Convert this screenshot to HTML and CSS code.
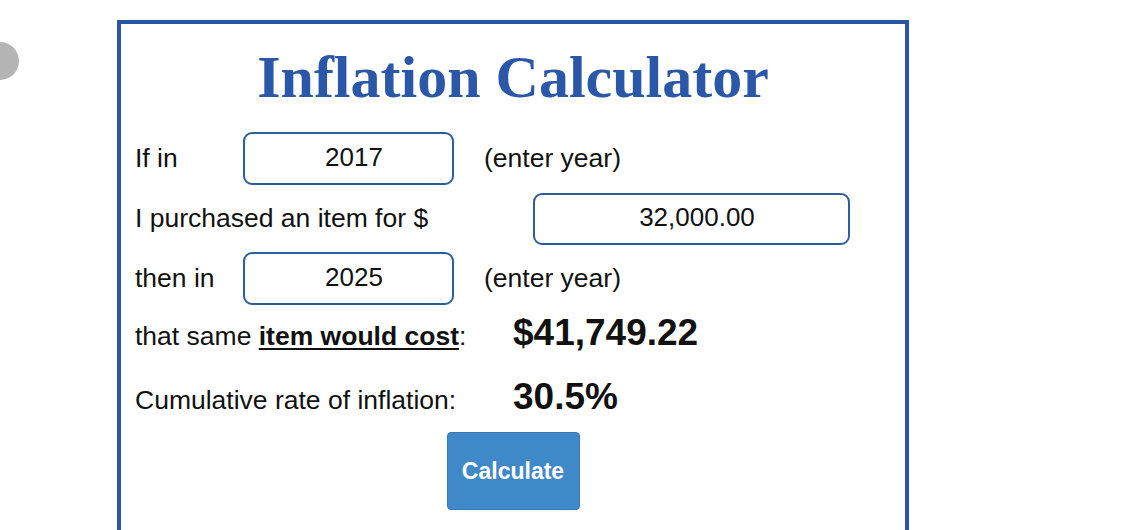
FILE: index.html
```html
<!DOCTYPE html>
<html>
<head>
<meta charset="utf-8">
<link rel="stylesheet" href="styles.css">
</head>
<body>
<div class="dot"></div>
<div class="card">
  <h1 class="title">Inflation Calculator</h1>
  <div class="row input-row">
    <span class="label w-short">If in</span>
    <input class="field year" type="text" value="2017">
    <span class="hint">(enter year)</span>
  </div>
  <div class="row input-row">
    <span class="label w-long">I purchased an item for $</span>
    <input class="field amount" type="text" value="32,000.00">
  </div>
  <div class="row input-row">
    <span class="label w-short">then in</span>
    <input class="field year" type="text" value="2025">
    <span class="hint">(enter year)</span>
  </div>
  <div class="row result-row">
    <span class="label w-mid">that same <u class="em">item would cost</u>:</span>
    <span class="value">$41,749.22</span>
  </div>
  <div class="row result-row second">
    <span class="label w-mid">Cumulative rate of inflation:</span>
    <span class="value">30.5%</span>
  </div>
  <div class="actions">
    <button class="calc" type="button">Calculate</button>
  </div>
</div>
</body>
</html>
```
FILE: styles.css
```css
html, body {
  margin: 0;
  padding: 0;
  background: #ffffff;
  overflow: hidden;
}
body {
  font-family: "Liberation Sans", Arial, sans-serif;
  color: #111;
  height: 530px;
}
.dot {
  position: absolute;
  left: -19px;
  top: 42px;
  width: 38px;
  height: 38px;
  border-radius: 50%;
  background: #b4b4b4;
}
.card {
  margin: 20px 0 0 117px;
  width: 770px;
  height: 600px;
  border: 4px solid #2856a3;
  border-bottom: none;
  padding: 0 0 0 14px;
  box-sizing: content-box;
}
.title {
  margin: 18px 0 0 -14px;
  font-family: "Liberation Serif", "Times New Roman", serif;
  font-weight: bold;
  font-size: 60px;
  line-height: 70px;
  color: #2b57a8;
  text-align: center;
}
.row {
  display: flex;
  font-size: 26.5px;
}
.input-row {
  align-items: center;
  height: 53px;
}
.input-row + .input-row {
  margin-top: 7px;
}
.title + .row {
  margin-top: 20px;
}
.label {
  flex: none;
  white-space: nowrap;
}
.w-short { width: 108px; }
.w-long { width: 398px; }
.w-mid { width: 378px; }
.field {
  box-sizing: border-box;
  height: 53px;
  border: 2px solid #2d5d9d;
  border-radius: 9px;
  background: #fff;
  font-family: "Liberation Sans", Arial, sans-serif;
  font-size: 26px;
  color: #111;
  text-align: center;
  padding: 0 0 2px 11px;
  margin: 0;
  outline: none;
}
.year { width: 211px; }
.amount { width: 317px; height: 52px; }
.hint {
  margin-left: 30px;
}
.result-row {
  align-items: baseline;
  margin-top: 7px;
}
.result-row.second {
  margin-top: 22px;
}
.em {
  font-weight: bold;
  text-decoration-thickness: 2px;
  text-underline-offset: 3px;
}
.value {
  font-weight: bold;
  font-size: 37px;
}
.actions {
  display: flex;
  justify-content: center;
  padding-right: 14px;
  margin-top: 14px;
}
.calc {
  width: 133px;
  height: 78px;
  margin-left: 0;
  background: #3f89c9;
  border: 1px solid #3677b5;
  border-radius: 4px;
  color: #fff;
  font-family: "Liberation Sans", Arial, sans-serif;
  font-weight: bold;
  font-size: 23px;
  padding: 0;
}
```
